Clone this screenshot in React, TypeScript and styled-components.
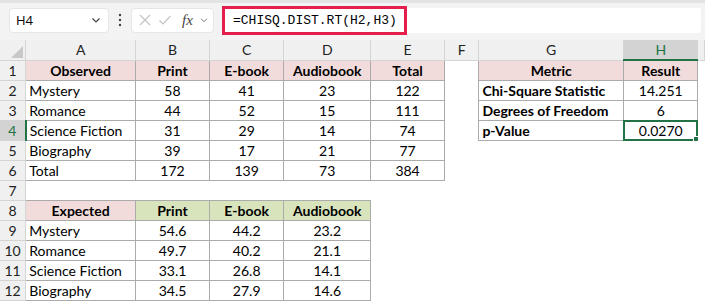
import styled, { createGlobalStyle } from 'styled-components'

const GRID = '#ababab'
const HEAD_BG = '#f0f0f0'
const HEAD_LINE = '#d4d4d4'
const PINK = '#f2dcdb'
const GREEN = '#d8e4bc'
const XL_GREEN = '#217346'

const COLS = [
  { id: 'A', w: 110 },
  { id: 'B', w: 75 },
  { id: 'C', w: 75 },
  { id: 'D', w: 87 },
  { id: 'E', w: 75 },
  { id: 'F', w: 35 },
  { id: 'G', w: 145 },
  { id: 'H', w: 75 },
]

type Fill = 'pink' | 'green' | undefined
type Cell = { v?: string; bold?: boolean; left?: boolean; fill?: Fill; box?: boolean }

const hdr = (v: string, fill: Fill = 'pink'): Cell => ({ v, bold: true, fill, box: true })
const txt = (v: string): Cell => ({ v, left: true, box: true })
const num = (v: string): Cell => ({ v, box: true })
const boldTxt = (v: string): Cell => ({ v, bold: true, left: true, box: true })
const empty: Cell = {}

const ROWS: Cell[][] = [
  [hdr('Observed'), hdr('Print'), hdr('E-book'), hdr('Audiobook'), hdr('Total'), empty, hdr('Metric'), hdr('Result')],
  [txt('Mystery'), num('58'), num('41'), num('23'), num('122'), empty, boldTxt('Chi-Square Statistic'), num('14.251')],
  [txt('Romance'), num('44'), num('52'), num('15'), num('111'), empty, boldTxt('Degrees of Freedom'), num('6')],
  [txt('Science Fiction'), num('31'), num('29'), num('14'), num('74'), empty, boldTxt('p-Value'), num('0.0270')],
  [txt('Biography'), num('39'), num('17'), num('21'), num('77'), empty, empty, empty],
  [txt('Total'), num('172'), num('139'), num('73'), num('384'), empty, empty, empty],
  [empty, empty, empty, empty, empty, empty, empty, empty],
  [hdr('Expected'), hdr('Print', 'green'), hdr('E-book', 'green'), hdr('Audiobook', 'green'), empty, empty, empty, empty],
  [txt('Mystery'), num('54.6'), num('44.2'), num('23.2'), empty, empty, empty, empty],
  [txt('Romance'), num('49.7'), num('40.2'), num('21.1'), empty, empty, empty, empty],
  [txt('Science Fiction'), num('33.1'), num('26.8'), num('14.1'), empty, empty, empty, empty],
  [txt('Biography'), num('34.5'), num('27.9'), num('14.6'), empty, empty, empty, empty],
]

const ACTIVE_ROW = 4
const ACTIVE_COL = 'H'

const GlobalStyle = createGlobalStyle`
  html, body { margin: 0; padding: 0; background: #ffffff; }
  body { width: 705px; height: 302px; overflow: hidden; }
`

const Window = styled.div`
  width: 705px;
  height: 302px;
  overflow: hidden;
  background: #ffffff;
  font-family: Lato, 'Liberation Sans', sans-serif;
  color: #000;
`

const Toolbar = styled.div`
  height: 40px;
  box-sizing: border-box;
  border-top: 3px solid #e3e3e3;
  background: #f3f3f3;
  display: flex;
  align-items: center;
  padding: 0 4px 3px 9px;
`

const NameBox = styled.div`
  width: 100px;
  height: 25px;
  box-sizing: border-box;
  background: #fff;
  border: 1px solid #e6e6e6;
  border-radius: 4px;
  display: flex;
  align-items: center;
  justify-content: space-between;
  padding: 0 6px 0 6px;
  font-family: 'Segoe UI', 'Open Sans', sans-serif;
  font-size: 13px;
`

const DotsWrap = styled.div`
  width: 22px;
  display: flex;
  justify-content: center;
`

const FxBox = styled.div`
  width: 83px;
  height: 25px;
  box-sizing: border-box;
  background: #fff;
  border: 1px solid #e6e6e6;
  border-radius: 4px;
  display: flex;
  align-items: center;
  gap: 6px;
  padding: 0 4px 0 6px;
  margin-right: 8px;
`

const FxText = styled.span`
  font-family: 'Liberation Serif', serif;
  font-style: italic;
  font-size: 15px;
  color: #444;
  margin-left: 4px;
`

const FormulaField = styled.div`
  flex: 1;
  height: 25px;
  box-sizing: border-box;
  background: #fff;
  border-radius: 2px;
  display: flex;
  align-items: center;
`

const FormulaHighlight = styled.div`
  height: 29px;
  box-sizing: border-box;
  border: 3px solid #e51f4c;
  display: flex;
  align-items: center;
  padding: 0 7px 0 8px;
  font-family: 'Liberation Mono', monospace;
  font-size: 13px;
  color: #000;
`

const Sheet = styled.table`
  border-collapse: collapse;
  table-layout: fixed;
  width: auto;
`

const ColHead = styled.th<{ $active?: boolean }>`
  height: 19px;
  padding: 0;
  font-weight: 400;
  font-size: 14px;
  text-align: center;
  background: ${(p) => (p.$active ? '#d3d3d3' : HEAD_BG)};
  color: ${(p) => (p.$active ? XL_GREEN : '#222')};
  border-right: 1px solid ${HEAD_LINE};
  border-bottom: ${(p) => (p.$active ? `2px solid ${XL_GREEN}` : `1px solid ${HEAD_LINE}`)};
  overflow: hidden;
`

const Corner = styled.th`
  position: relative;
  width: 25px;
  padding: 0;
  background: ${HEAD_BG};
  border-right: 1px solid ${HEAD_LINE};
  border-bottom: 1px solid ${HEAD_LINE};
`

const RowHead = styled.th<{ $active?: boolean }>`
  width: 25px;
  height: 19px;
  padding: 0;
  font-weight: 400;
  font-size: 14px;
  text-align: center;
  background: ${(p) => (p.$active ? '#d3d3d3' : HEAD_BG)};
  color: ${(p) => (p.$active ? XL_GREEN : '#222')};
  border-right: ${(p) => (p.$active ? `2px solid ${XL_GREEN}` : `1px solid ${HEAD_LINE}`)};
  border-bottom: 1px solid ${HEAD_LINE};
`

const DataCell = styled.td<{ $bold?: boolean; $left?: boolean; $fill?: Fill; $box?: boolean }>`
  position: relative;
  height: 19px;
  padding: 0 3px;
  font-size: 14px;
  line-height: 19px;
  white-space: nowrap;
  overflow: visible;
  font-weight: ${(p) => (p.$bold ? 700 : 400)};
  text-align: ${(p) => (p.$left ? 'left' : 'center')};
  background: ${(p) => (p.$fill === 'pink' ? PINK : p.$fill === 'green' ? GREEN : '#fff')};
  border: ${(p) => (p.$box ? `1px solid ${GRID}` : 'none')};
`

const Selection = styled.div`
  position: absolute;
  left: -1px;
  top: -1px;
  right: -1px;
  bottom: -1px;
  border: 2px solid ${XL_GREEN};
  pointer-events: none;
`

const FillHandle = styled.div`
  position: absolute;
  right: -4px;
  bottom: -4px;
  width: 5px;
  height: 5px;
  background: ${XL_GREEN};
  border: 1px solid #fff;
`

function Chevron() {
  return (
    <svg width="12" height="12" viewBox="0 0 12 12">
      <path d="M2.5 4.5 L6 8 L9.5 4.5" fill="none" stroke="#444" strokeWidth="1.2" />
    </svg>
  )
}

function App() {
  return (
    <Window>
      <GlobalStyle />
      <Toolbar>
        <NameBox>
          <span>H4</span>
          <Chevron />
        </NameBox>
        <DotsWrap>
          <svg width="4" height="14" viewBox="0 0 4 14">
            <circle cx="2" cy="2" r="1.2" fill="#444" />
            <circle cx="2" cy="7" r="1.2" fill="#444" />
            <circle cx="2" cy="12" r="1.2" fill="#444" />
          </svg>
        </DotsWrap>
        <FxBox>
          <svg width="14" height="14" viewBox="0 0 14 14">
            <path d="M2 2 L12 12 M12 2 L2 12" stroke="#c4c4c4" strokeWidth="1.2" />
          </svg>
          <svg width="14" height="14" viewBox="0 0 14 14">
            <path d="M1.5 7.5 L5 11 L12.5 3" fill="none" stroke="#c4c4c4" strokeWidth="1.2" />
          </svg>
          <FxText>fx</FxText>
          <svg width="10" height="10" viewBox="0 0 12 12">
            <path d="M2.5 4.5 L6 8 L9.5 4.5" fill="none" stroke="#777" strokeWidth="1.2" />
          </svg>
        </FxBox>
        <FormulaField>
          <FormulaHighlight>=CHISQ.DIST.RT(H2,H3)</FormulaHighlight>
        </FormulaField>
      </Toolbar>

      <Sheet>
        <colgroup>
          <col style={{ width: 25 }} />
          {COLS.map((c) => (
            <col key={c.id} style={{ width: c.w }} />
          ))}
          <col style={{ width: 3 }} />
        </colgroup>
        <thead>
          <tr>
            <Corner>
              <svg width="12" height="12" viewBox="0 0 12 12" style={{ position: 'absolute', right: 2, bottom: 2 }}>
                <path d="M12 0 L12 12 L0 12 Z" fill="#c8c8c8" />
              </svg>
            </Corner>
            {COLS.map((c) => (
              <ColHead key={c.id} $active={c.id === ACTIVE_COL}>
                {c.id}
              </ColHead>
            ))}
            <ColHead />
          </tr>
        </thead>
        <tbody>
          {ROWS.map((row, ri) => (
            <tr key={ri}>
              <RowHead $active={ri + 1 === ACTIVE_ROW}>{ri + 1}</RowHead>
              {row.map((cell, ci) => {
                const active = ri + 1 === ACTIVE_ROW && COLS[ci].id === ACTIVE_COL
                return (
                  <DataCell key={ci} $bold={cell.bold} $left={cell.left} $fill={cell.fill} $box={cell.box}>
                    {cell.v}
                    {active && (
                      <Selection>
                        <FillHandle />
                      </Selection>
                    )}
                  </DataCell>
                )
              })}
              <DataCell />
            </tr>
          ))}
        </tbody>
      </Sheet>
    </Window>
  )
}

export default App
